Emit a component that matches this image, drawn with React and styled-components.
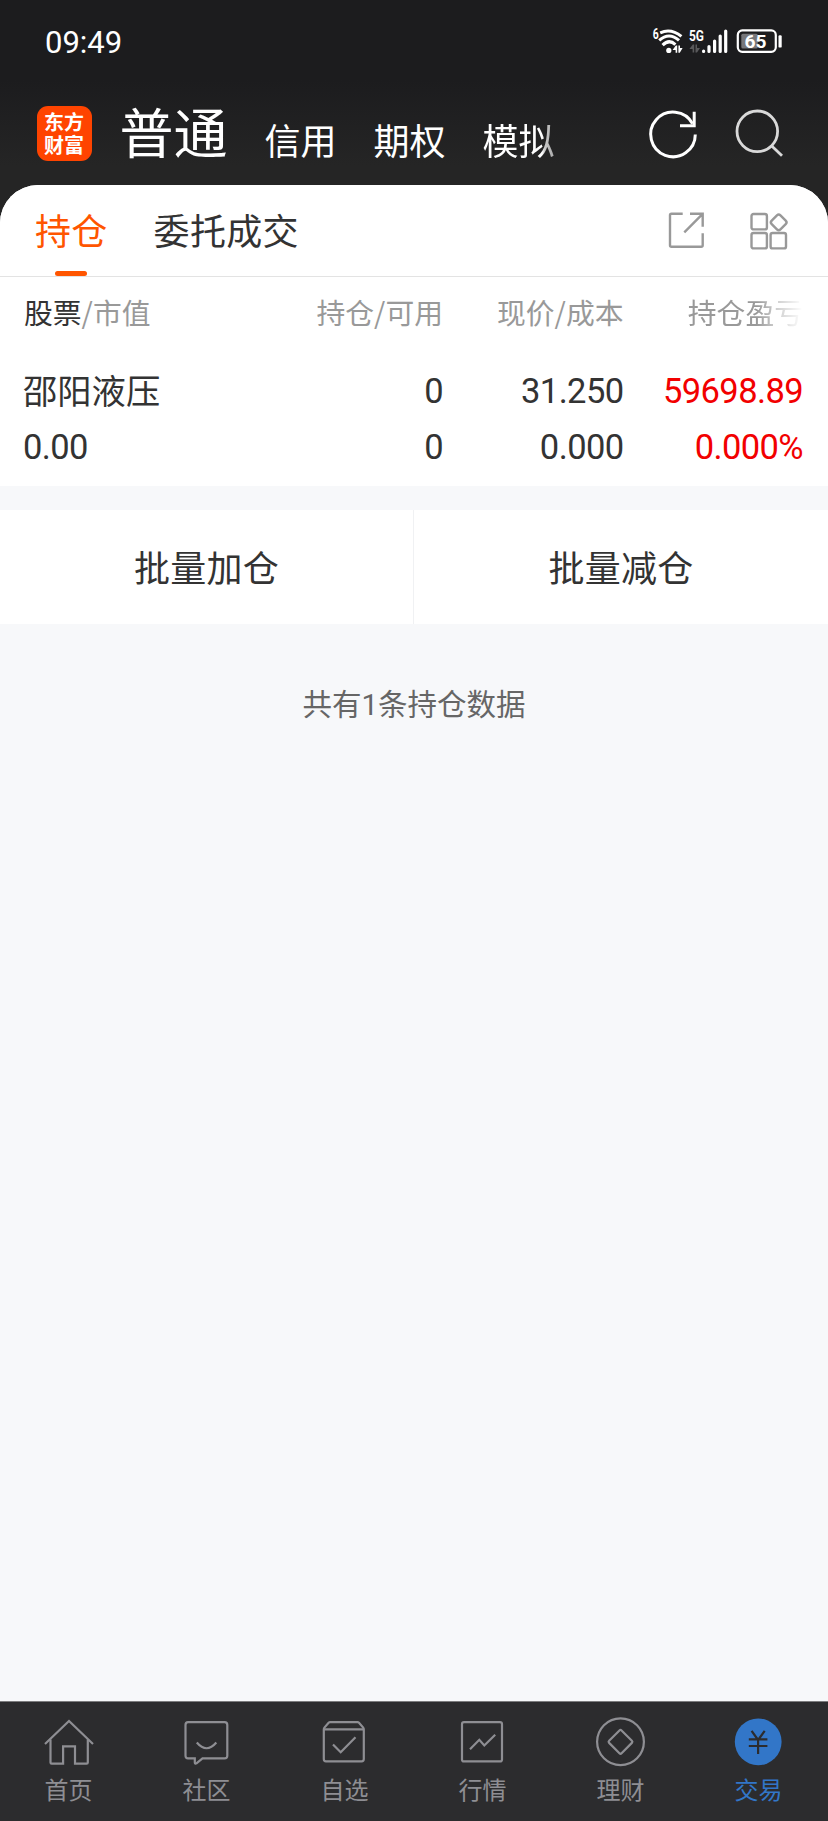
import React from 'react';
import styled, { createGlobalStyle, css } from 'styled-components';

const colors = {
  orange: '#ff5500',
  red: '#f20000',
  text: '#333333',
  muted: '#999999',
  page: '#f7f8fa',
  nav: '#2c2c2e',
  navText: '#8e8e93',
  blue: '#3276c8',
};

const fontStack = '"Noto Sans CJK SC", "Noto Sans", sans-serif';
const numberStack = 'Roboto, "Noto Sans", sans-serif';

const GlobalStyle = createGlobalStyle`
  * {
    box-sizing: border-box;
  }

  body {
    margin: 0;
    font-family: ${fontStack};
    color: ${colors.text};
  }

  button {
    padding: 0;
    border: none;
    background: none;
    font: inherit;
    color: inherit;
  }

  svg {
    display: block;
    flex: none;
    overflow: visible;
  }
`;

const Screen = styled.div`
  display: flex;
  flex-direction: column;
  width: 828px;
  height: 1821px;
  overflow: hidden;
  background: linear-gradient(#1c1c1e 0, #1c1c1e 80px, #252525 165px);
`;

const StatusBar = styled.div`
  display: flex;
  align-items: center;
  justify-content: space-between;
  height: 82px;
  padding: 0 46px 0 45px;
  color: #fff;
`;

const Clock = styled.span`
  font-family: ${numberStack};
  font-size: 31px;
  line-height: 40px;
  padding-top: 3px;
`;

const TopBar = styled.header`
  display: flex;
  align-items: center;
  height: 103px;
  padding: 0 44px 0 36.5px;
  color: #fff;
`;

const Logo = styled.div`
  display: flex;
  flex-direction: column;
  align-items: center;
  justify-content: center;
  width: 55px;
  height: 55px;
  padding-bottom: 2px;
  border-radius: 11px;
  background: #ff4400;
  font-size: 20px;
  line-height: 23px;
  font-weight: 700;
`;

const AccountTabs = styled.nav`
  display: flex;
  align-items: center;
  flex: 1;
  margin-left: 28px;
`;

const AccountTab = styled.button`
  margin: 10px 37px 0 0;
  font-size: 36px;
  line-height: 40px;

  ${props => props.$active && css`
    margin: -6px 37px 0 0;
    font-size: 54px;
    line-height: 60px;
  `}

  ${props => props.$faded && css`
    mask-image: linear-gradient(90deg, #000 82%, rgba(0, 0, 0, 0.75) 86%, rgba(0, 0, 0, 0.6));
  `}
`;

const TopActions = styled.div`
  display: flex;
  gap: 36px;
`;

const Sheet = styled.main`
  flex: 1;
  border-radius: 38px 38px 0 0;
  background: ${colors.page};
  overflow: hidden;
`;

const TabBar = styled.div`
  display: flex;
  align-items: flex-start;
  height: 92px;
  padding: 0 40px 0 35px;
  background: #fff;
  border-bottom: 1px solid #e3e3e3;
`;

const Tab = styled.button`
  display: flex;
  flex-direction: column;
  align-items: center;
  justify-content: space-between;
  height: 91px;
  padding-top: 23px;
  margin-right: 46px;
  font-size: 36px;
  line-height: 42px;
  letter-spacing: 0.3px;
  color: ${props => (props.$active ? colors.orange : colors.text)};

  &::after {
    content: '';
    width: 32px;
    height: 5px;
    border-radius: 3px;
    background: ${props => (props.$active ? colors.orange : 'transparent')};
  }
`;

const TabTools = styled.div`
  display: flex;
  gap: 41px;
  margin: 26px 0 0 auto;
`;

const Holdings = styled.section`
  height: 209px;
  padding: 15px 25px 0 24px;
  background: #fff;
`;

const Row = styled.div`
  display: grid;
  grid-template-columns: 200px 219px 180.5px 1fr;
  font-size: 34px;
  line-height: 56px;
`;

const HeadRow = styled(Row)`
  font-size: 28.8px;
  line-height: 40px;
  margin-bottom: 31px;
  color: ${colors.muted};
`;

const Cell = styled.span`
  white-space: nowrap;
  text-align: right;
`;

const HeadCell = styled(Cell)`
  text-align: ${props => props.$left && 'left'};

  ${props => props.$faded && css`
    mask-image: linear-gradient(90deg, #000 calc(100% - 46px), rgba(0, 0, 0, 0.5) calc(100% - 28px), transparent);
  `}
`;

const NameCell = styled(Cell)`
  text-align: left;
  margin-left: -1px;
  font-size: 34.3px;
  line-height: 52px;
`;

const NumberCell = styled(Cell)`
  font-family: ${numberStack};
  font-size: 34.5px;
  letter-spacing: -0.6px;
  text-align: ${props => props.$left && 'left'};
  margin-left: ${props => props.$left && '-1px'};
  color: ${props => props.$red && colors.red};
`;

const Strong = styled.span`
  color: ${colors.text};
`;

const BatchActions = styled.div`
  display: grid;
  grid-template-columns: 1fr 1fr;
  margin-top: 24px;
  background: #fff;
`;

const BatchButton = styled.button`
  height: 114px;
  padding-bottom: 2px;
  font-size: 36px;
  letter-spacing: 0.3px;

  &:first-child {
    border-right: 1px solid #f0f1f3;
  }
`;

const Summary = styled.p`
  margin: 57px 0 0;
  font-size: 29.5px;
  line-height: 42px;
  text-align: center;
  color: #666;
`;

const Count = styled.span`
  font-family: ${numberStack};
`;

const BottomNav = styled.nav`
  display: grid;
  grid-template-columns: repeat(6, 1fr);
  height: 120px;
  border-top: 1px solid #7c7c7e;
  background: ${colors.nav};
`;

const NavItem = styled.button`
  display: flex;
  flex-direction: column;
  align-items: center;
  padding: 15px 1px 0 0;
  font-size: 24px;
  line-height: 36px;
  color: ${props => (props.$active ? colors.blue : colors.navText)};

  svg {
    margin-bottom: 4px;
  }
`;

const StatusIcons = () => (
  <svg width="130" height="26" viewBox="0 0 130 26" fill="#fff" fontFamily={numberStack} fontWeight="700">
    <text x="0.8" y="11.2" fontSize="14" textLength="6" lengthAdjust="spacingAndGlyphs">6</text>
    <g fill="none" stroke="#fff" strokeWidth="3.1">
      <path d="M8.2 4.8Q19 0 29.4 8.4" />
      <path d="M7.2 12.4Q17 3.6 27 12.4" />
      <path d="M10.6 17.2Q17 10.6 23.4 16.6" />
    </g>
    <circle cx="16.8" cy="22.4" r="2.6" />
    <path d="M20.6 22l3.2-4.5h1.4v7.2h-1.6V22zM26.4 17.5H28V20h2.6l-2.8 4.7h-1.4z" />
    <text x="37" y="12.6" fontSize="14.5" textLength="15" lengthAdjust="spacingAndGlyphs">5G</text>
    <path fill="#59595b" d="M37.4 21l3.4-4.5h1.4v8h-1.6V21zM43.5 16.5h1.5V20h3l-3 4.5h-1.5z" />
    <path
      fill="none"
      stroke="#fff"
      strokeWidth="3.2"
      strokeLinecap="round"
      d="M51.6 23v.4M57 18.5v5M62.6 13v10.5M68.2 8v15.5M73.7 3v20.5"
    />
    <rect x="85.8" y="2.4" width="38" height="21.4" rx="4.5" fill="none" stroke="#fff" strokeWidth="2.2" />
    <rect x="89.3" y="5.8" width="16.5" height="14.8" rx="1.5" fill="#77777a" />
    <rect x="126.5" y="7.2" width="3.2" height="12.4" rx="1.2" />
    <text x="92.5" y="19.5" fontSize="18" textLength="22" lengthAdjust="spacingAndGlyphs">65</text>
  </svg>
);

const RefreshIcon = () => (
  <svg width="50" height="50" viewBox="0 0 50 50" fill="none" stroke="#fff" strokeWidth="3">
    <path d="M47.3 25.5A22.3 22.3 0 1 1 44.6 14.8" />
    <path d="M46.2 2.8V16.8H32" />
  </svg>
);

const SearchIcon = () => (
  <svg width="50" height="50" viewBox="0 0 50 50" fill="none" stroke="#d9d9d9" strokeWidth="2.8">
    <circle cx="23.3" cy="22.3" r="20.3" />
    <path d="M37.5 36.8L48 46.8" />
  </svg>
);

const ShareIcon = () => (
  <svg width="40" height="40" viewBox="0 0 40 40" fill="none" stroke={colors.muted} strokeWidth="2.4">
    <path d="M15.7 2.8H4.5Q3 2.8 3 4.3V34.2Q3 35.7 4.5 35.7H34.2Q35.7 35.7 35.7 34.2V22.3" />
    <path d="M23 2.8H35.7V15.7M35.4 3.2L17.3 21.3" />
  </svg>
);

const GridIcon = () => (
  <svg width="40" height="40" viewBox="0 0 40 40" fill="none" stroke={colors.muted} strokeWidth="2.4">
    <rect x="3.5" y="3" width="15.4" height="15.4" rx="2" />
    <rect x="3.5" y="22" width="15.4" height="15.4" rx="2" />
    <rect x="22.6" y="22" width="15.4" height="15.4" rx="2" />
    <rect x="24.5" y="5.1" width="12.4" height="12.4" rx="2.5" transform="rotate(45 30.7 11.3)" />
  </svg>
);

const navIcons = {
  home: (
    <>
      <path d="M1 27L25 4L49 27" />
      <path d="M6.5 22.5V45.5Q6.5 46.6 7.6 46.6H19.1V29.4H31V46.6H42.6Q43.8 46.6 43.8 45.5V22.5" />
    </>
  ),
  community: (
    <>
      <path d="M6 5.2H42.6Q45.3 5.2 45.3 7.9V38.8Q45.3 41.4 42.6 41.4H20.5L14.5 46.4Q12.8 47.3 12.8 45.4V41.4H6Q3.5 41.4 3.5 38.8V7.9Q3.5 5.2 6 5.2Z" />
      <path d="M14.8 25.5Q24.6 37 34.3 25.5" />
    </>
  ),
  watchlist: (
    <>
      <path d="M3.8 12.4V42Q3.8 44.3 6 44.3H41.6Q43.8 44.3 43.8 42V12.4Q43.8 11.4 43.2 10.6L39 5.8Q38.4 5.2 37.5 5.2H10.1Q9.2 5.2 8.6 5.8L4.4 10.6Q3.8 11.4 3.8 12.4Z" />
      <path d="M4 12.4H43.6M13 27.5L20.7 35.2L35.5 20.3" />
    </>
  ),
  market: (
    <>
      <rect x="4" y="5.2" width="40" height="39.2" rx="2" />
      <path d="M12 32.3L21.3 22.8L26.3 28.5L37.2 17.7" />
    </>
  ),
  wealth: (
    <>
      <circle cx="24.5" cy="24.8" r="23.4" />
      <rect x="15.7" y="16" width="17.6" height="17.6" rx="1.5" transform="rotate(45 24.5 24.8)" />
    </>
  ),
  trade: (
    <>
      <circle cx="24.2" cy="24.8" r="23.4" fill={colors.blue} stroke="none" />
      <path stroke={colors.nav} d="M17.6 13.8L24.1 23L30.7 13.8M24.1 22.5V37M14.8 22.3H33.4M14.8 29H33.4" />
    </>
  ),
};

const NavIcon = ({ name }) => (
  <svg
    width="50"
    height="50"
    viewBox="0 0 50 50"
    fill="none"
    stroke="currentColor"
    strokeWidth="2.2"
  >
    {navIcons[name]}
  </svg>
);

const accounts = ['普通', '信用', '期权', '模拟'];

const holdings = [
  { name: '邵阳液压', value: '0.00', amount: '0', available: '0', price: '31.250', cost: '0.000', profit: '59698.89', rate: '0.000%' },
];

const navItems = [
  { icon: 'home', label: '首页' },
  { icon: 'community', label: '社区' },
  { icon: 'watchlist', label: '自选' },
  { icon: 'market', label: '行情' },
  { icon: 'wealth', label: '理财' },
  { icon: 'trade', label: '交易' },
];

const HoldingRows = ({ item }) => (
  <>
    <Row>
      <NameCell>{item.name}</NameCell>
      <NumberCell>{item.amount}</NumberCell>
      <NumberCell>{item.price}</NumberCell>
      <NumberCell $red>{item.profit}</NumberCell>
    </Row>
    <Row>
      <NumberCell $left>{item.value}</NumberCell>
      <NumberCell>{item.available}</NumberCell>
      <NumberCell>{item.cost}</NumberCell>
      <NumberCell $red>{item.rate}</NumberCell>
    </Row>
  </>
);

export default function App() {
  return (
    <Screen>
      <GlobalStyle />
      <StatusBar>
        <Clock>09:49</Clock>
        <StatusIcons />
      </StatusBar>

      <TopBar>
        <Logo>
          <span>东方</span>
          <span>财富</span>
        </Logo>
        <AccountTabs>
          {accounts.map((name, i) => (
            <AccountTab key={name} $active={i === 0} $faded={i === accounts.length - 1}>
              {name}
            </AccountTab>
          ))}
        </AccountTabs>
        <TopActions>
          <RefreshIcon />
          <SearchIcon />
        </TopActions>
      </TopBar>

      <Sheet>
        <TabBar>
          <Tab $active>持仓</Tab>
          <Tab>委托成交</Tab>
          <TabTools>
            <ShareIcon />
            <GridIcon />
          </TabTools>
        </TabBar>

        <Holdings>
          <HeadRow>
            <HeadCell $left><Strong>股票</Strong>/市值</HeadCell>
            <HeadCell>持仓/可用</HeadCell>
            <HeadCell>现价/成本</HeadCell>
            <HeadCell $faded>持仓盈亏</HeadCell>
          </HeadRow>
          {holdings.map(item => <HoldingRows key={item.name} item={item} />)}
        </Holdings>

        <BatchActions>
          <BatchButton>批量加仓</BatchButton>
          <BatchButton>批量减仓</BatchButton>
        </BatchActions>

        <Summary>共有<Count>{holdings.length}</Count>条持仓数据</Summary>
      </Sheet>

      <BottomNav>
        {navItems.map(({ icon, label }) => (
          <NavItem key={icon} $active={icon === 'trade'}>
            <NavIcon name={icon} />
            {label}
          </NavItem>
        ))}
      </BottomNav>
    </Screen>
  );
}
